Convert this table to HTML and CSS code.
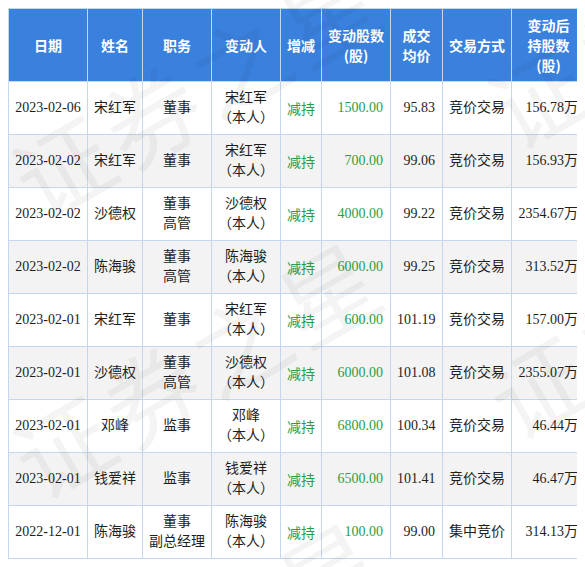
FILE: index.html
```html
<!DOCTYPE html>
<html lang="zh-CN">
<head>
<meta charset="utf-8">
<link rel="stylesheet" href="styles.css">
</head>
<body>
<table class="trades">
  <colgroup>
    <col class="c-date"><col class="c-name"><col class="c-role"><col class="c-who"><col class="c-dir">
    <col class="c-qty"><col class="c-price"><col class="c-mode"><col class="c-hold">
  </colgroup>
  <thead>
    <tr>
      <th>日期</th><th>姓名</th><th>职务</th><th>变动人</th><th>增减</th>
      <th>变动股数<br>(股)</th><th>成交<br>均价</th><th>交易方式</th><th>变动后<br>持股数<br>(股)</th>
    </tr>
  </thead>
  <tbody>
    <tr><td>2023-02-06</td><td>宋红军</td><td>董事</td><td>宋红军<br>（本人）</td><td class="dir">减持</td><td class="num qty">1500.00</td><td class="num">95.83</td><td>竞价交易</td><td class="num">156.78万</td></tr>
    <tr><td>2023-02-02</td><td>宋红军</td><td>董事</td><td>宋红军<br>（本人）</td><td class="dir">减持</td><td class="num qty">700.00</td><td class="num">99.06</td><td>竞价交易</td><td class="num">156.93万</td></tr>
    <tr><td>2023-02-02</td><td>沙德权</td><td>董事<br>高管</td><td>沙德权<br>（本人）</td><td class="dir">减持</td><td class="num qty">4000.00</td><td class="num">99.22</td><td>竞价交易</td><td class="num">2354.67万</td></tr>
    <tr><td>2023-02-02</td><td>陈海骏</td><td>董事<br>高管</td><td>陈海骏<br>（本人）</td><td class="dir">减持</td><td class="num qty">6000.00</td><td class="num">99.25</td><td>竞价交易</td><td class="num">313.52万</td></tr>
    <tr><td>2023-02-01</td><td>宋红军</td><td>董事</td><td>宋红军<br>（本人）</td><td class="dir">减持</td><td class="num qty">600.00</td><td class="num">101.19</td><td>竞价交易</td><td class="num">157.00万</td></tr>
    <tr><td>2023-02-01</td><td>沙德权</td><td>董事<br>高管</td><td>沙德权<br>（本人）</td><td class="dir">减持</td><td class="num qty">6000.00</td><td class="num">101.08</td><td>竞价交易</td><td class="num">2355.07万</td></tr>
    <tr><td>2023-02-01</td><td>邓峰</td><td>监事</td><td>邓峰<br>（本人）</td><td class="dir">减持</td><td class="num qty">6800.00</td><td class="num">100.34</td><td>竞价交易</td><td class="num">46.44万</td></tr>
    <tr><td>2023-02-01</td><td>钱爱祥</td><td>监事</td><td>钱爱祥<br>（本人）</td><td class="dir">减持</td><td class="num qty">6500.00</td><td class="num">101.41</td><td>竞价交易</td><td class="num">46.47万</td></tr>
    <tr><td>2022-12-01</td><td>陈海骏</td><td>董事<br>副总经理</td><td>陈海骏<br>（本人）</td><td class="dir">减持</td><td class="num qty">100.00</td><td class="num">99.00</td><td>集中竞价</td><td class="num">314.13万</td></tr>
  </tbody>
</table>
<div class="watermark" aria-hidden="true">
  <span class="wm wm-a">证券之星</span>
  <span class="wm wm-b">证券之星</span>
  <span class="wm wm-c">证券之星</span>
  <span class="wm wm-d">证券之星</span>
  <span class="wm wm-e">证券之星</span>
</div>
</body>
</html>
```

FILE: styles.css
```css
html, body {
  overflow: hidden;
}
body {
  margin: 8px;
  background: #ffffff;
  font-family: "Liberation Serif", "Noto Sans CJK SC", serif;
  font-size: 14px;
  color: #1e1e1e;
}
.trades {
  width: 577px;
  table-layout: fixed;
  border-collapse: collapse;
}
.c-date { width: 79px; }
.c-name { width: 55px; }
.c-role { width: 69px; }
.c-who { width: 69px; }
.c-dir { width: 41px; }
.c-qty { width: 69px; }
.c-price { width: 52px; }
.c-mode { width: 69px; }
.c-hold { width: 74px; }

.trades th,
.trades td {
  border: 1px solid #c3d7ee;
  line-height: 20px;
  text-align: center;
  vertical-align: middle;
  padding: 0 6px;
  white-space: nowrap;
}
.trades th {
  height: 72px;
  padding: 0 2px;
  background: #3a81de;
  color: #ffffff;
  font-family: "Noto Sans CJK SC", sans-serif;
  font-weight: bold;
}
.trades td {
  height: 52px;
}
.trades tbody tr:nth-child(even) td {
  background: #f3f3f3;
}
.trades td.num {
  text-align: right;
  padding-right: 7px;
}
.trades td.qty,
.trades td.dir {
  color: #2a9e47;
}
.trades td.dir {
  padding: 0;
  font-family: "Noto Sans CJK SC", sans-serif;
}

.watermark {
  position: absolute;
  left: 0;
  top: 0;
  width: 585px;
  height: 567px;
  overflow: hidden;
  pointer-events: none;
}
.wm {
  position: absolute;
  font-family: "Noto Sans CJK SC", sans-serif;
  font-size: 96px;
  line-height: 96px;
  letter-spacing: 6px;
  color: rgba(0, 0, 0, 0.045);
  white-space: nowrap;
  transform: rotate(-30deg);
  transform-origin: 0 50%;
}
.wm-a { left: 20px; top: 140px; }
.wm-b { left: 20px; top: 420px; }
.wm-c { left: 495px; top: 70px; }
.wm-d { left: 495px; top: 360px; }
.wm-e { left: 20px; top: 700px; }
```
